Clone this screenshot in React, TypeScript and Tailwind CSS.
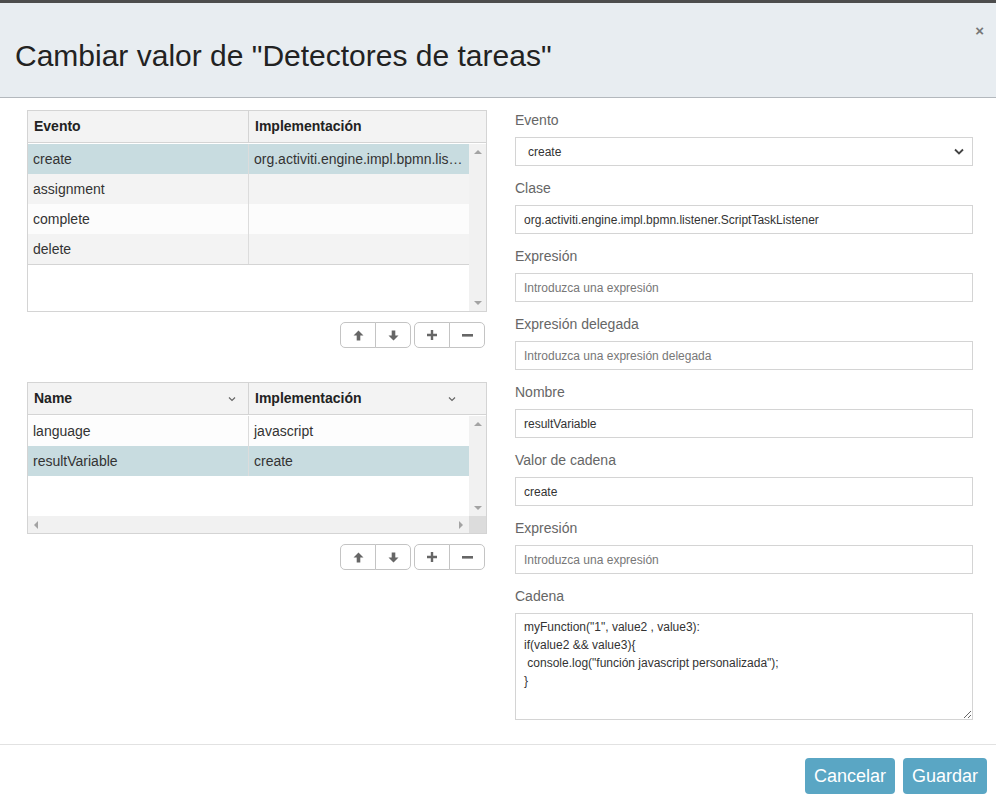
import type { ReactNode } from 'react';

const font = { fontFamily: '"Liberation Sans", Arial, sans-serif' };

function Tri({ dir }: { dir: 'up' | 'down' | 'left' | 'right' }) {
  const pts = {
    up: '0,5 4,1 8,5',
    down: '0,1 8,1 4,5',
    left: '5,0 5,8 1,4',
    right: '1,0 1,8 5,4',
  }[dir];
  const horiz = dir === 'left' || dir === 'right';
  return (
    <svg width={horiz ? 6 : 8} height={horiz ? 8 : 6} viewBox={horiz ? '0 0 6 8' : '0 0 8 6'}>
      <polygon points={pts} fill="#a3a3a3" />
    </svg>
  );
}

function Chevron() {
  return (
    <svg width="8" height="6" viewBox="0 0 8 6">
      <path d="M1 1.5 L4 4.5 L7 1.5" stroke="#666" strokeWidth="1.2" fill="none" />
    </svg>
  );
}

function VScroll() {
  return (
    <div className="flex w-[17px] flex-col items-center justify-between bg-[#f1f1f1] py-[5px]">
      <Tri dir="up" />
      <Tri dir="down" />
    </div>
  );
}

type Row = { a: string; b: string; bg: string };

function Table({
  cols,
  rows,
  height,
  hscroll,
  chevrons,
}: {
  cols: [string, string];
  rows: Row[];
  height: number;
  hscroll?: boolean;
  chevrons?: boolean;
}) {
  return (
    <div className="border border-[#d4d4d4] bg-white">
      <div className="flex h-[32px] border-b border-[#d4d4d4] bg-[#f3f3f3] text-[14px] font-bold text-[#222]">
        <div className="flex w-[221px] items-center justify-between border-r border-[#d4d4d4] pl-[6px] pr-[12px]">
          <span>{cols[0]}</span>
          {chevrons && <Chevron />}
        </div>
        <div className="flex flex-1 items-center justify-between pl-[6px] pr-[30px]">
          <span>{cols[1]}</span>
          {chevrons && <Chevron />}
        </div>
      </div>
      <div className="mt-[1px] flex flex-col" style={{ height }}>
        <div className="flex min-h-0 flex-1">
          <div className="flex-1 bg-white">
            {rows.map((r) => (
              <div key={r.a} className={`flex h-[30px] items-center text-[14px] text-[#333] ${r.bg}`}>
                <div className="flex h-full w-[221px] items-center border-r border-[#dcdcdc] pl-[5px]">{r.a}</div>
                <div className="w-[220px] truncate pl-[5px] pr-[4px]">{r.b}</div>
              </div>
            ))}
            {!hscroll && <div className="border-t border-[#d4d4d4]" />}
          </div>
          <VScroll />
        </div>
        {hscroll && (
          <div className="flex h-[17px]">
            <div className="flex flex-1 items-center justify-between bg-[#f1f1f1] px-[5px]">
              <Tri dir="left" />
              <Tri dir="right" />
            </div>
            <div className="w-[17px] bg-[#dcdcdc]" />
          </div>
        )}
      </div>
    </div>
  );
}

function IconBtn({ children, left }: { children: ReactNode; left?: boolean }) {
  return (
    <button
      type="button"
      className={`flex h-[26px] w-[36px] items-center justify-center border border-[#c4c4c4] bg-white ${
        left ? 'rounded-l-[5px]' : '-ml-px rounded-r-[5px]'
      }`}
    >
      {children}
    </button>
  );
}

function Toolbar() {
  const c = '#666';
  return (
    <div className="mt-[10px] flex justify-end gap-[3px] pr-[2px]">
      <div className="flex">
        <IconBtn left>
          <svg width="11" height="11" viewBox="0 0 11 11">
            <path d="M5.5 0.5 L10.5 5.5 L7.3 5.5 L7.3 10.5 L3.7 10.5 L3.7 5.5 L0.5 5.5 Z" fill={c} />
          </svg>
        </IconBtn>
        <IconBtn>
          <svg width="11" height="11" viewBox="0 0 11 11">
            <path d="M5.5 10.5 L10.5 5.5 L7.3 5.5 L7.3 0.5 L3.7 0.5 L3.7 5.5 L0.5 5.5 Z" fill={c} />
          </svg>
        </IconBtn>
      </div>
      <div className="flex">
        <IconBtn left>
          <svg width="10" height="10" viewBox="0 0 10 10">
            <path d="M3.8 0 H6.2 V3.8 H10 V6.2 H6.2 V10 H3.8 V6.2 H0 V3.8 H3.8 Z" fill={c} />
          </svg>
        </IconBtn>
        <IconBtn>
          <svg width="11" height="3" viewBox="0 0 11 3">
            <rect width="11" height="2.6" fill={c} />
          </svg>
        </IconBtn>
      </div>
    </div>
  );
}

function Field({ label, children }: { label: string; children: ReactNode }) {
  return (
    <div className="mb-[12px]">
      <div className="mb-[7px] h-[20px] text-[14px] leading-[20px] text-[#666]">{label}</div>
      {children}
    </div>
  );
}

function TextInput({ value, placeholder }: { value?: string; placeholder?: string }) {
  return (
    <input
      readOnly
      value={value ?? ''}
      placeholder={placeholder}
      className="block h-[29px] w-full border border-[#d4d4d4] bg-white px-[8px] text-[12px] text-[#333] outline-none placeholder:text-[#777]"
      style={font}
    />
  );
}

export default function App() {
  return (
    <div className="relative h-[806px] w-[996px] overflow-hidden bg-white" style={font}>
      <div className="h-[3px] bg-[#4d4d4d]" />
      <div className="relative flex h-[95px] items-center border-b border-[#b3b8bd] bg-[#e8edf1] pl-[15px]">
        <h1 className="mt-[11px] text-[30px] font-normal leading-none text-[#222]">
          Cambiar valor de "Detectores de tareas"
        </h1>
        <span className="absolute right-[12px] top-[17px] text-[15px] font-bold text-[#777]">×</span>
      </div>

      <div className="flex h-[647px] border-b border-[#e2e2e2]">
        <div className="ml-[27px] w-[460px] pt-[12px]">
          <Table
            cols={['Evento', 'Implementación']}
            height={167}
            rows={[
              { a: 'create', b: 'org.activiti.engine.impl.bpmn.listener.ScriptTaskListener', bg: 'bg-[#c8dce0]' },
              { a: 'assignment', b: '', bg: 'bg-[#f3f3f3]' },
              { a: 'complete', b: '', bg: 'bg-[#fcfcfc]' },
              { a: 'delete', b: '', bg: 'bg-[#f3f3f3]' },
            ]}
          />
          <Toolbar />
          <div className="mt-[34px]">
            <Table
              cols={['Name', 'Implementación']}
              height={117}
              hscroll
              chevrons
              rows={[
                { a: 'language', b: 'javascript', bg: 'bg-[#fdfdfd]' },
                { a: 'resultVariable', b: 'create', bg: 'bg-[#c8dce0]' },
              ]}
            />
          </div>
          <Toolbar />
        </div>

        <div className="ml-[28px] w-[458px] pt-[12px]">
          <Field label="Evento">
            <div className="flex h-[29px] w-full items-center justify-between border border-[#d4d4d4] bg-white pl-[12px] pr-[8px] text-[12px] text-[#333]">
              <span>create</span>
              <svg width="10" height="7" viewBox="0 0 10 7">
                <path d="M1 1.5 L5 5.5 L9 1.5" stroke="#444" strokeWidth="1.8" fill="none" />
              </svg>
            </div>
          </Field>
          <Field label="Clase">
            <TextInput value="org.activiti.engine.impl.bpmn.listener.ScriptTaskListener" />
          </Field>
          <Field label="Expresión">
            <TextInput placeholder="Introduzca una expresión" />
          </Field>
          <Field label="Expresión delegada">
            <TextInput placeholder="Introduzca una expresión delegada" />
          </Field>
          <Field label="Nombre">
            <TextInput value="resultVariable" />
          </Field>
          <Field label="Valor de cadena">
            <TextInput value="create" />
          </Field>
          <Field label="Expresión">
            <TextInput placeholder="Introduzca una expresión" />
          </Field>
          <Field label="Cadena">
            <textarea
              readOnly
              className="block h-[107px] w-full resize-y border border-[#d4d4d4] bg-white px-[8px] py-[4px] text-[12px] leading-[18px] text-[#333] outline-none"
              style={font}
              value={'myFunction("1", value2 , value3):\nif(value2 && value3){\n console.log("función javascript personalizada");\n}'}
            />
          </Field>
        </div>
      </div>

      <div className="flex justify-end gap-[8px] pr-[9px] pt-[13px]">
        <button type="button" className="h-[36px] rounded-[4px] bg-[#5aa6c4] px-[9px] text-[18px] text-white">
          Cancelar
        </button>
        <button type="button" className="h-[36px] rounded-[4px] bg-[#5aa6c4] px-[9px] text-[18px] text-white">
          Guardar
        </button>
      </div>
    </div>
  );
}
